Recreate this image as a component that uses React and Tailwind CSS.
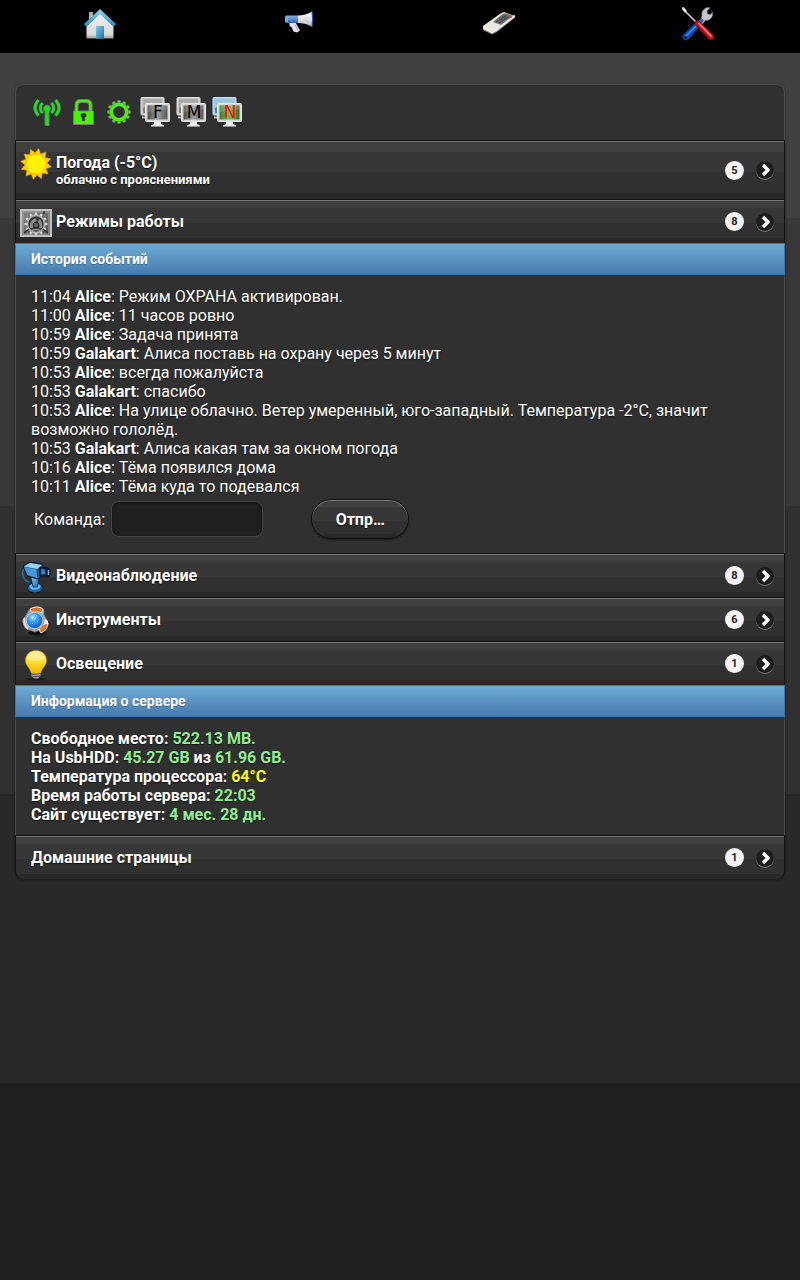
import React from "react";

const history = [
  ["11:04", "Alice", "Режим ОХРАНА активирован."],
  ["11:00", "Alice", "11 часов ровно"],
  ["10:59", "Alice", "Задача принята"],
  ["10:59", "Galakart", "Алиса поставь на охрану через 5 минут"],
  ["10:53", "Alice", "всегда пожалуйста"],
  ["10:53", "Galakart", "спасибо"],
  ["10:53", "Alice", "На улице облачно. Ветер умеренный, юго-западный. Температура -2°C, значит возможно гололёд."],
  ["10:53", "Galakart", "Алиса какая там за окном погода"],
  ["10:16", "Alice", "Тёма появился дома"],
  ["10:11", "Alice", "Тёма куда то подевался"],
];

function HomeIcon() {
  return (
    <svg viewBox="0 0 32 32" className="size-8" aria-hidden="true">
      <defs>
        <linearGradient id="hm-wall" x1="0" y1="0" x2="0" y2="1">
          <stop offset="0" stopColor="#f4f4f4" />
          <stop offset=".85" stopColor="#d8d8d8" />
          <stop offset="1" stopColor="#999" />
        </linearGradient>
        <linearGradient id="hm-roof" x1="0" y1="0" x2="0" y2="1">
          <stop offset="0" stopColor="#8fd8f2" />
          <stop offset="1" stopColor="#2b8cbc" />
        </linearGradient>
        <linearGradient id="hm-door" x1="0" y1="0" x2="1" y2="1">
          <stop offset="0" stopColor="#7fcdec" />
          <stop offset="1" stopColor="#1672a8" />
        </linearGradient>
      </defs>
      <rect x="5" y="4" width="4" height="9" fill="#aaa" />
      <path d="M2.500 17 16 4 29.500 17V30.500H2.500z" fill="url(#hm-wall)" />
      <path d="M16 1 32 16 30.500 18 28.500 18 16 6 3.500 18 1.500 18 0 16z" fill="url(#hm-roof)" />
      <rect x="12" y="18" width="8" height="12.500" fill="url(#hm-door)" />
    </svg>
  );
}

function MegaphoneIcon() {
  return (
    <svg viewBox="0 0 32 32" className="size-8" aria-hidden="true">
      <defs>
        <linearGradient id="mg-blue" x1="0" y1="0" x2="0" y2="1">
          <stop offset="0" stopColor="#86b2ea" />
          <stop offset="1" stopColor="#2a62b4" />
        </linearGradient>
        <linearGradient id="mg-white" x1="0" y1="0" x2="0" y2="1">
          <stop offset="0" stopColor="#fff" />
          <stop offset="1" stopColor="#bdbdc6" />
        </linearGradient>
      </defs>
      <path d="M6.500 14.500h6l4.500 8-3 2-3.500-1-2-4.500-2-1z" fill="#e4e4e8" />
      <path d="M12 16.500l3 6" stroke="#a9a9b4" />
      <rect x="2" y="7.500" width="14" height="7.500" rx="1.500" fill="url(#mg-blue)" />
      <path d="M2 9h3v5H2z" fill="#7ba6df" />
      <path d="M15 7.500c5 0 10-1.500 14-4v15.500c-4-3-9-4-14-4z" fill="url(#mg-white)" />
      <path d="M29 3.500q1.500 7.500 0 15.500" stroke="#2858a8" strokeWidth="1.200" fill="none" />
    </svg>
  );
}

function RemoteIcon() {
  return (
    <svg viewBox="0 0 34 32" className="h-8 w-[34px]" aria-hidden="true">
      <path d="M1 18v4l9 4.500 5-2.500 18-14.500V6.500z" fill="#8d8d88" />
      <path d="M1 18 18.500 5.500 22 4l11 4-.500 1.500L14.500 23 10 25 1 20.500z" fill="#e9e8e2" />
      <path d="M11 14 20.500 6l3-.8L31 7.800 19 17z" fill="#707070" />
      <path d="M14 14 24.500 7.500M17 15 27 8.500M20 8.500l5 2M17 10.500l5 2" stroke="#4b4b4b" strokeWidth="1.200" />
      <circle cx="28.500" cy="8.600" r="1.500" fill="#e54a3d" />
      <path d="M1.500 20.500 10 24.500 15 22" stroke="#fafafa" fill="none" />
    </svg>
  );
}

function ToolsIcon() {
  return (
    <svg viewBox="0 0 34 36" className="h-9 w-[34px]" aria-hidden="true">
      <path d="M18.500 16 21 10q-1-5 3-7.500 2-1.300 5-.8l-3 3.300 .5 3 3 .5 2-2.500q1 5-3 7.500-2 1.200-4 .8L21 18.500z" fill="#c8c8ca" stroke="#77797c" strokeWidth=".6" />
      <path d="M17 14.500 21 17.500 7.500 33q-3 2.500-5 .3-2-2.300.3-5z" fill="#0c51bd" stroke="#063588" strokeWidth=".6" />
      <path d="M17 18 4.500 30.500" stroke="#4b90ee" strokeWidth="1.200" />
      <circle cx="4.500" cy="31.500" r="1.300" fill="#000" />
      <path d="M17.500 14.500l3-2.500 2.500 2.500-2.500 3z" fill="#1f67d0" />
      <path d="M3.500 4.500 16 17" stroke="#d9d1d4" strokeWidth="1.500" />
      <path d="M1 1.500 2.500 1 6 5 4.500 6.500 1.500 4z" fill="#f5f5f5" />
      <path d="M14 17q0-3 3.500-2.500L32 28.500q2 3-.5 5-2 1-4-1L14.500 19z" fill="#c9141a" stroke="#750508" strokeWidth=".6" />
      <path d="M17.500 17 30.500 30.500" stroke="#f58d8d" strokeWidth="1.500" />
      <path d="M15 18.500 28.500 32" stroke="#8e070d" />
    </svg>
  );
}

function AntennaIcon() {
  return (
    <svg viewBox="0 0 32 32" className="size-8" aria-hidden="true">
      <path d="M7.500 4q-7 8 0 15.500M24.500 4q7 8 0 15.500M11.500 7q-4.500 5 0 10M20.500 7q4.500 5 0 10" fill="none" stroke="#777" strokeWidth="3.200" />
      <path d="M14 29.500V15.500a3.500 3.500 0 1 1 4 0v14z" fill="#14e60f" stroke="#777" />
      <path d="M7.500 4q-7 8 0 15.500M24.500 4q7 8 0 15.500M11.500 7q-4.500 5 0 10M20.500 7q4.500 5 0 10" fill="none" stroke="#14e60f" strokeWidth="2.200" />
    </svg>
  );
}

function LockIcon() {
  return (
    <svg viewBox="0 0 32 32" className="size-8" aria-hidden="true">
      <path d="M6.500 28.500v-13.500h1.500V9q0-5.500 5.500-5.500h6q5.500 0 5.500 5.500v6h1.500v13.500zM11 15h11V9.500q0-3-3-3h-5Q11 6.500 11 9.500z" fill="#45f600" fillRule="evenodd" stroke="#787878" />
      <path d="M15 25v-3.500q-1.500-1-1.500-2.500 0-2 3-2t3 2q0 1.500-1.500 2.500V25z" fill="#303030" stroke="#777" strokeWidth=".6" />
    </svg>
  );
}

const teeth = [0, 30, 60, 90, 120, 150, 180, 210, 240, 270, 300, 330];

function GearIcon() {
  return (
    <svg viewBox="0 0 32 32" className="size-8" aria-hidden="true">
      <g transform="translate(16 16)">
        {teeth.map((a) => (
          <path key={a} d="M-1.800-8.500 -1.200-11.500h2.400L1.800-8.500z" fill="#45f600" stroke="#787878" strokeWidth=".7" transform={`rotate(${a})`} />
        ))}
        <circle r="7.700" fill="none" stroke="#787878" strokeWidth="4" />
        <circle r="7.700" fill="none" stroke="#45f600" strokeWidth="3" />
      </g>
    </svg>
  );
}

function MonitorIcon({ letter, active }) {
  const id = "mon-" + letter;
  return (
    <svg viewBox="0 0 32 32" className="size-8" role="img" aria-label={letter}>
      <defs>
        <linearGradient id={id} x1="0" y1="0" x2="1" y2="0">
          <stop offset="0" stopColor={active ? "#3b7f2a" : "#4c4c4c"} />
          <stop offset=".5" stopColor={active ? "#80b85c" : "#9c9c9c"} />
          <stop offset="1" stopColor={active ? "#347222" : "#5a5a5a"} />
        </linearGradient>
      </defs>
      <path d="M3 20.500h4v2H3z" fill="#b9b9b9" />
      <rect x="2" y="1.500" width="23" height="17.500" rx="1" fill={active ? "#a9cde5" : "#c9c9c9"} stroke={active ? "#c3dff0" : "#dedede"} />
      <rect x="4" y="3" width="19" height="14" fill={active ? "#4f86ae" : "#808080"} />
      <path d="M4 3h19v4q-10 0-19 5z" fill={active ? "#9cc4de" : "#a9a9a9"} />
      <path d="M15 25h7v3l3 1.500v1H12v-1l3-1.500z" fill="#ededed" />
      <rect x="6.500" y="7.500" width="24" height="18" rx="1" fill="#d5d5d5" stroke="#e9e9e9" />
      <rect x="8.500" y="9.500" width="20" height="14" fill={`url(#${id})`} />
      <path d="M8.500 9.500h20v4q-10 0-20 3z" fill="#fff" opacity=".15" />
      <text x="19" y="22" textAnchor="middle" fontSize="17" fill={active ? "#ff1010" : "#000"} className="font-['DejaVu_Sans',sans-serif] [text-shadow:none]">{letter}</text>
    </svg>
  );
}

function SunIcon() {
  return (
    <svg viewBox="0 0 32 32" className="size-8" aria-hidden="true">
      <g transform="translate(16 16)">
        {teeth.map((a) => (
          <path key={a} d="M-3.500-9.500 0-15.500 3.500-9.500z" fill="#ffd21a" stroke="#f1a900" strokeWidth=".6" transform={`rotate(${a + 10})`} />
        ))}
        <circle r="11" fill="#ffb900" />
        <circle r="9.800" fill="#fff200" />
      </g>
    </svg>
  );
}

function ModesIcon() {
  return (
    <svg viewBox="0 0 32 32" className="size-8" aria-hidden="true">
      <defs>
        <linearGradient id="md" x1="0" y1="0" x2="1" y2="1">
          <stop offset="0" stopColor="#8a8a8a" />
          <stop offset="1" stopColor="#505050" />
        </linearGradient>
      </defs>
      <rect x="1" y="3" width="30" height="26" fill="url(#md)" stroke="#c0c0c0" strokeWidth="2" />
      <rect x="3" y="5" width="26" height="22" fill="none" stroke="#a3a3a3" />
      <g transform="translate(16 17)">
        {teeth.map((a) => (
          <path key={a} d="M-1.600-9-.9-11.500h1.800L1.600-9z" fill="#d2d2d2" transform={`rotate(${a})`} />
        ))}
        <circle r="8.500" fill="#383838" stroke="#b5b5b5" strokeWidth="1.500" />
        <path d="M-6 4Q-7-3-1-6L1-3Q-3-1-3 4zM6 4Q7-3 3-5L2-2Q4 0 3 4z" fill="#8e8e8e" />
        <circle r="2.800" cy="1" fill="#606060" stroke="#1e1e1e" />
        <path d="M-5 7Q0 4 5 7" stroke="#9a9a9a" strokeWidth="1.500" fill="none" />
      </g>
      <path d="M4 26l5-4M28 26l-5-4M24 4v3" stroke="#222" strokeWidth="1.200" />
    </svg>
  );
}

function CameraIcon() {
  return (
    <svg viewBox="0 0 32 32" className="size-8" aria-hidden="true">
      <defs>
        <linearGradient id="cm" x1="0" y1="0" x2="1" y2="1">
          <stop offset="0" stopColor="#9bd5fb" />
          <stop offset="1" stopColor="#13609f" />
        </linearGradient>
      </defs>
      <path d="M4 8Q1.500 10 3 15t6 6" fill="none" stroke="#226ca8" strokeWidth="1.500" />
      <ellipse cx="15" cy="27" rx="7.500" ry="5" fill="#1b68aa" stroke="#061522" />
      <ellipse cx="15" cy="25.500" rx="5.500" ry="3.200" fill="#63b7f0" />
      <path d="M10.500 14h9l-2 12h-4.500z" fill="url(#cm)" stroke="#071e36" strokeWidth=".7" />
      <path d="M3 5 9 1l13 2 2 4 0 7-6 4L7 15z" fill="#14548f" stroke="#06121f" />
      <path d="M4 5.500 10 2l12 2-5 4z" fill="#9cd3f8" />
      <path d="M4 6 16.500 8.500 17 17 7.500 14z" fill="#4696d8" />
      <path d="M20 6.500l8 .5 2.500 3-1 5-9.500 0z" fill="#0c2439" stroke="#03090f" />
      <path d="M21 8h3.500l1 5.500H21z" fill="#2b82c8" />
      <path d="M28.500 9v5" stroke="#7fb6dd" strokeWidth="1.500" />
    </svg>
  );
}

function InstrumentsIcon() {
  return (
    <svg viewBox="0 0 32 32" className="size-8" aria-hidden="true">
      <defs>
        <radialGradient id="in" cx=".4" cy=".3" r=".75">
          <stop offset="0" stopColor="#b3e4ff" />
          <stop offset=".4" stopColor="#389df2" />
          <stop offset="1" stopColor="#0757bd" />
        </radialGradient>
      </defs>
      <ellipse cx="17" cy="28" rx="9" ry="2.500" fill="#111" />
      <path d="M9 5 14 2h7l3 3 0 5 3 5v3l-4 1-1 5-7 3-8-3-4-8 2-4z" fill="#a9abae" stroke="#707274" strokeWidth=".8" />
      <path d="M10 4q7-4 13 0l-1.500 4q-5-3-10-1z" fill="#e86b23" stroke="#eee" />
      <path d="M22 20l6-2q0 7-7 10l-2-3z" fill="#e8722c" stroke="#e4e4e4" />
      <path d="M25 14l3 2 0 3-4 0z" fill="#ededed" />
      <path d="M5 12q-3 1-2 6 1 5 5 7l2-4z" fill="#dedede" stroke="#888" strokeWidth=".6" />
      <circle cx="14.500" cy="15.500" r="9" fill="#cfd5db" stroke="#8d9298" strokeWidth=".7" />
      <circle cx="14.500" cy="15.500" r="7.800" fill="url(#in)" />
      <path d="M11 12l2 2M16 10l1 1M17 16l1 1M12 18l1 1" stroke="#fff" opacity=".6" />
    </svg>
  );
}

function BulbIcon() {
  return (
    <svg viewBox="0 0 32 32" className="size-8" aria-hidden="true">
      <defs>
        <linearGradient id="bl" x1="0" y1="0" x2="0" y2="1">
          <stop offset="0" stopColor="#ffe98d" />
          <stop offset=".5" stopColor="#ffdc2b" />
          <stop offset="1" stopColor="#f4b300" />
        </linearGradient>
      </defs>
      <ellipse cx="16" cy="30" rx="11" ry="1.500" fill="#1c1c1c" />
      <path d="M11.500 22h9v5l-2.500 2.500h-4L11.500 27z" fill="#a9a9a9" />
      <path d="M11.500 25.500l9-1M11.500 28l9-1" stroke="#444" strokeWidth="1.200" />
      <path d="M16 1.500C9.500 1.500 5.500 6 5.500 11.500c0 5 4.500 7 5.500 12q5 2 10 0c1-5 5.500-7 5.500-12C26.500 6 22.500 1.500 16 1.500z" fill="url(#bl)" stroke="#cf9510" strokeWidth=".6" />
      <path d="M16 3C11 3 8 6.500 8 10.500q7 3 16 0C24 6.500 21 3 16 3z" fill="#fff5b8" opacity=".6" />
    </svg>
  );
}

function ArrowIcon() {
  return (
    <svg viewBox="0 0 18 18" className="size-[18px] rounded-full bg-[#1e1e1e] shadow-[0_1px_0_#777]" aria-hidden="true">
      <path d="M7 4 12 9 7 14" fill="none" stroke="#fff" strokeWidth="3.400" strokeLinejoin="round" />
    </svg>
  );
}

const bands =
  "bg-[linear-gradient(#404040_19%,#373737_19%_54%,#303030_54%_89%,#282828_89%)]";

function Row({ icon, title, note, count, last }) {
  return (
    <li>
      <a
        href="#"
        className={`flex justify-between border border-b-0 border-[#111] pr-2.5 shadow-[inset_0_1px_0_#777] ${bands} ${
          last ? "rounded-b-lg border-b" : ""
        } ${note ? "min-h-[59px]" : "min-h-11"}`}
      >
        <span className="flex min-w-0">
          {icon ? <span className="mx-1 mt-[7px] shrink-0">{icon}</span> : <span className="w-[15px]" />}
          <span className="pt-3">
            <span className="block text-base leading-[19px] font-bold">{title}</span>
            {note && <span className="block text-[13px] leading-4 font-bold">{note}</span>}
          </span>
        </span>
        <span className="flex shrink-0 items-center gap-3">
          <span className="flex size-[19px] items-center justify-center rounded-full bg-[#f4f4f4] text-[11px] leading-none font-bold text-[#222] [text-shadow:none]">
            {count}
          </span>
          <ArrowIcon />
        </span>
      </a>
    </li>
  );
}

function Divider({ children }) {
  return (
    <h2 className="h-8 border border-[#3b73a8] bg-linear-to-b from-[#6facd5] to-[#497bae] px-[15px] text-sm leading-[30px] font-bold [text-shadow:0_1px_1px_#3e6790]">
      {children}
    </h2>
  );
}

function Good({ children }) {
  return <span className="text-[#90ee90]">{children}</span>;
}

const panel = "border-x border-[#4a4a4a] bg-[#303030] px-[15px] pt-3";

export default function App() {
  return (
    <div className="min-h-screen bg-[linear-gradient(#404040_17%,#383838_17%_39.5%,#303030_39.5%_62%,#282828_62%_84.6%,#202020_84.6%)] font-[Roboto,sans-serif] text-base leading-[19px] text-white [text-shadow:0_1px_1px_#111]">
      <nav className="grid h-[53px] grid-cols-4 bg-black pr-0.5">
        <a href="#" aria-label="Домой" className="flex justify-center pt-2"><HomeIcon /></a>
        <a href="#" aria-label="Оповещения" className="flex justify-center pt-2"><MegaphoneIcon /></a>
        <a href="#" aria-label="Пульт" className="flex justify-center pt-2"><RemoteIcon /></a>
        <a href="#" aria-label="Настройки" className="flex justify-center pt-1.5"><ToolsIcon /></a>
      </nav>

      <main className="px-[15px] pt-[31px] pb-8">
        <div className="rounded-lg shadow-[0_1px_3px_#0006]">
          <div className="flex h-14 gap-1 rounded-t-lg border border-b-0 border-[#4a4a4a] bg-[#303030] px-[15px] pt-[11px]">
            <AntennaIcon />
            <LockIcon />
            <GearIcon />
            <MonitorIcon letter="F" />
            <MonitorIcon letter="M" />
            <MonitorIcon letter="N" active />
          </div>

          <ul>
            <Row icon={<SunIcon />} title="Погода (-5°C)" note="облачно с прояснениями" count={5} />
            <Row icon={<ModesIcon />} title="Режимы работы" count={8} />
          </ul>

          <Divider>История событий</Divider>
          <section className={`${panel} pb-3.5`}>
            {history.map(([time, who, text], i) => (
              <p key={i}>
                {time} <b>{who}</b>: {text}
              </p>
            ))}
            <form className="mt-[3px] flex items-center pl-[3px]" onSubmit={(e) => e.preventDefault()}>
              <label htmlFor="command">Команда:</label>
              <input
                id="command"
                type="text"
                className="ml-1.5 h-9 w-[152px] rounded-lg border border-[#444] bg-[#202020] px-2 shadow-[inset_0_1px_3px_#111] outline-none"
              />
              <button
                type="submit"
                className={`ml-12 h-10 w-[98px] rounded-full border border-[#111] font-bold shadow-[inset_0_1px_0_#777,0_1px_2px_#0008] [text-shadow:0_1px_1px_#111] ${bands}`}
              >
                Отпр…
              </button>
            </form>
          </section>

          <ul>
            <Row icon={<CameraIcon />} title="Видеонаблюдение" count={8} />
            <Row icon={<InstrumentsIcon />} title="Инструменты" count={6} />
            <Row icon={<BulbIcon />} title="Освещение" count={1} />
          </ul>

          <Divider>Информация о сервере</Divider>
          <section className={`${panel} pb-[11px] font-bold`}>
            <p>Свободное место: <Good>522.13 MB.</Good></p>
            <p>На UsbHDD: <Good>45.27 GB</Good> из <Good>61.96 GB.</Good></p>
            <p>Температура процессора: <span className="text-[#ff0]">64°C</span></p>
            <p>Время работы сервера: <Good>22:03</Good></p>
            <p>Сайт существует: <Good>4 мес. 28 дн.</Good></p>
          </section>

          <ul>
            <Row title="Домашние страницы" count={1} last />
          </ul>
        </div>
      </main>
    </div>
  );
}
